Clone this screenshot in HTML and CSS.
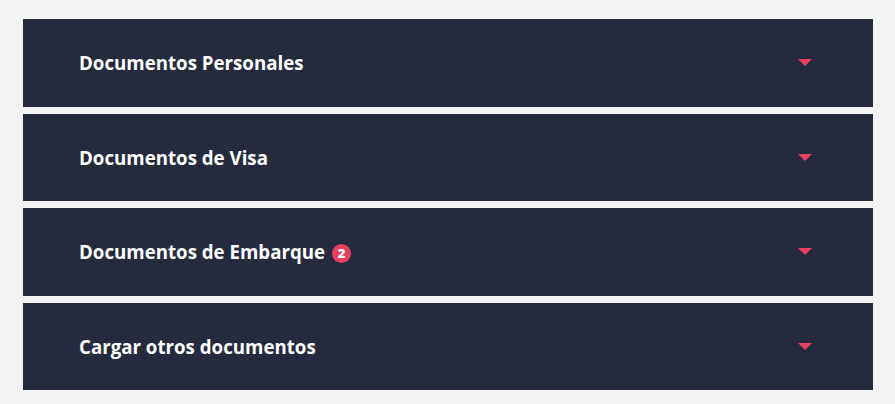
FILE: index.html
```html
<!DOCTYPE html>
<html lang="es">
<head>
<meta charset="utf-8">
<link rel="stylesheet" href="styles.css">
</head>
<body>
<div class="accordion">
  <div class="panel">
    <div class="title">Documentos Personales</div>
    <span class="caret"></span>
  </div>
  <div class="panel">
    <div class="title">Documentos de Visa</div>
    <span class="caret"></span>
  </div>
  <div class="panel">
    <div class="title">Documentos de Embarque <span class="badge">2</span></div>
    <span class="caret"></span>
  </div>
  <div class="panel">
    <div class="title">Cargar otros documentos</div>
    <span class="caret"></span>
  </div>
</div>
</body>
</html>
```
FILE: styles.css
```css
html, body {
  margin: 0;
  padding: 0;
  background: #f3f3f3;
}
.accordion {
  display: flex;
  flex-direction: column;
  gap: 7px;
  padding: 19px 22px 0 23px;
  width: 850px;
}
.panel {
  display: flex;
  align-items: center;
  justify-content: space-between;
  background: #252b3d;
  height: 87.6px;
  padding: 0 61px 0 56px;
  box-sizing: border-box;
}
.title {
  display: flex;
  align-items: center;
  gap: 7px;
  font-family: "Open Sans", "Liberation Sans", sans-serif;
  font-weight: 700;
  font-size: 18.7px;
  color: #ffffff;
}
.badge {
  display: inline-flex;
  align-items: center;
  justify-content: center;
  width: 19px;
  height: 19px;
  border-radius: 50%;
  background: #e8405e;
  color: #fff;
  font-size: 13px;
  font-weight: 800;
  margin-top: 3px;
}
.caret {
  width: 0;
  height: 0;
  border-left: 7px solid transparent;
  border-right: 7px solid transparent;
  border-top: 7px solid #e8405e;
}
```
